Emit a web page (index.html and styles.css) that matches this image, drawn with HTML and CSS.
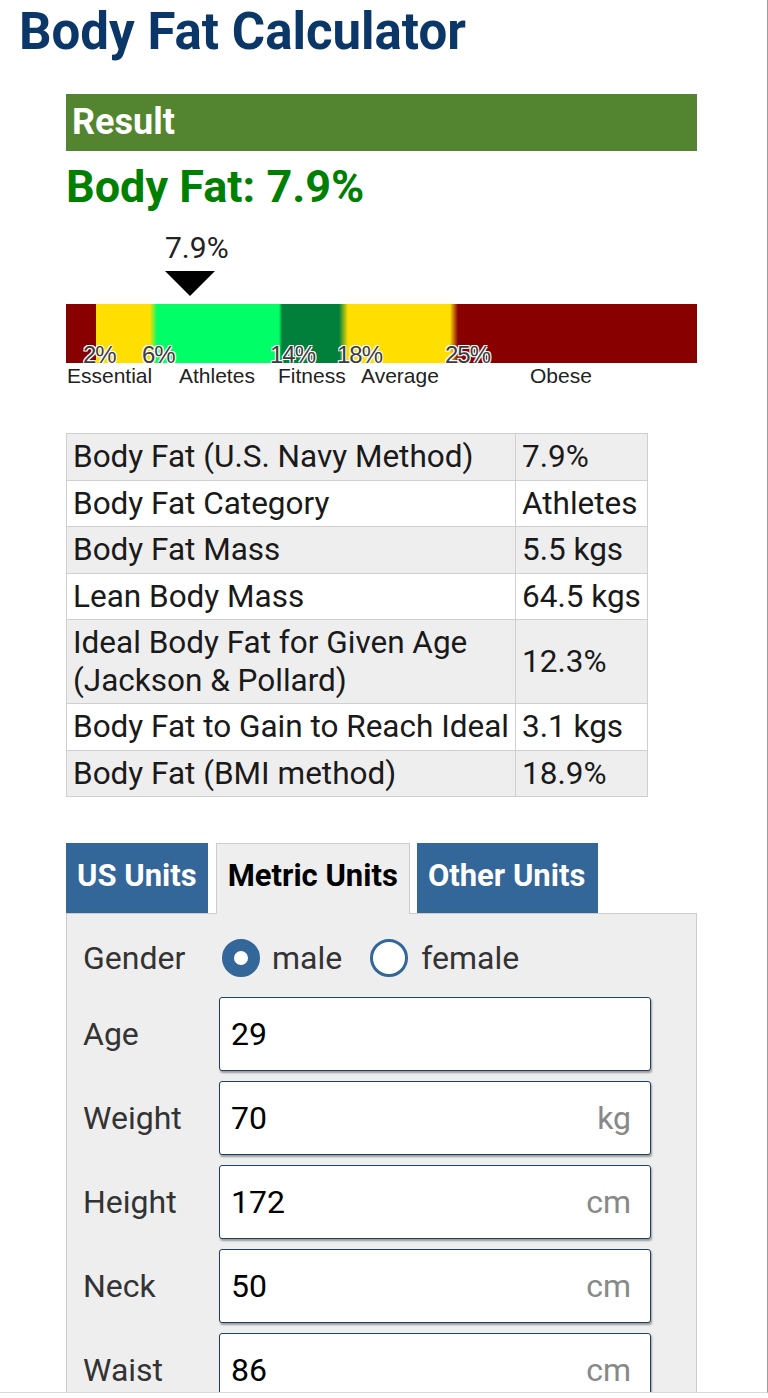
FILE: index.html
```html
<!DOCTYPE html>
<html lang="en">
<head>
<meta charset="utf-8">
<title>Body Fat Calculator</title>
<link rel="stylesheet" href="styles.css">
</head>
<body>
<div class="page">
  <h1 class="title">Body Fat Calculator</h1>
  <div class="content">
    <h2 class="result-head">Result</h2>
    <div class="result-value">Body Fat: 7.9%</div>

    <div class="scale">
      <div class="marker">
        <span class="marker-val">7.9%</span>
        <svg class="marker-arrow" viewBox="0 0 50 25" aria-hidden="true"><polygon points="0,0 50,0 25,25" fill="#000"/></svg>
      </div>
      <div class="bar">
        <span class="pct" style="left:17px">2%</span>
        <span class="pct" style="left:76px">6%</span>
        <span class="pct" style="left:204px">14%</span>
        <span class="pct" style="left:271px">18%</span>
        <span class="pct" style="left:379px">25%</span>
      </div>
      <div class="cats">
        <span class="cat" style="left:1px">Essential</span>
        <span class="cat" style="left:113px">Athletes</span>
        <span class="cat" style="left:212px">Fitness</span>
        <span class="cat" style="left:295px">Average</span>
        <span class="cat" style="left:464px">Obese</span>
      </div>
    </div>

    <table class="stats">
      <colgroup><col class="c1"><col class="c2"></colgroup>
      <tr><td>Body Fat (U.S. Navy Method)</td><td>7.9%</td></tr>
      <tr><td>Body Fat Category</td><td>Athletes</td></tr>
      <tr><td>Body Fat Mass</td><td>5.5 kgs</td></tr>
      <tr><td>Lean Body Mass</td><td>64.5 kgs</td></tr>
      <tr><td>Ideal Body Fat for Given Age (Jackson &amp; Pollard)</td><td>12.3%</td></tr>
      <tr><td>Body Fat to Gain to Reach Ideal</td><td>3.1 kgs</td></tr>
      <tr><td>Body Fat (BMI method)</td><td>18.9%</td></tr>
    </table>

    <div class="tabs">
      <div class="tab">US Units</div>
      <div class="tab active">Metric Units</div>
      <div class="tab other">Other Units</div>
    </div>
    <div class="panel">
      <div class="row gender-row">
        <span class="lbl">Gender</span>
        <div class="radios">
          <label class="radio"><input type="radio" name="g" class="radio-in male-in" checked><span>male</span></label>
          <label class="radio"><input type="radio" name="g" class="radio-in female-in"><span>female</span></label>
        </div>
      </div>
      <div class="row">
        <span class="lbl">Age</span>
        <div class="field"><input class="val" value="29"></div>
      </div>
      <div class="row">
        <span class="lbl">Weight</span>
        <div class="field"><input class="val" value="70"><span class="unit">kg</span></div>
      </div>
      <div class="row">
        <span class="lbl">Height</span>
        <div class="field"><input class="val" value="172"><span class="unit">cm</span></div>
      </div>
      <div class="row">
        <span class="lbl">Neck</span>
        <div class="field"><input class="val" value="50"><span class="unit">cm</span></div>
      </div>
      <div class="row">
        <span class="lbl">Waist</span>
        <div class="field"><input class="val" value="86"><span class="unit">cm</span></div>
      </div>
    </div>
  </div>
</div>
</body>
</html>
```
FILE: styles.css
```css
* { box-sizing: border-box; }
html, body { margin: 0; padding: 0; background: #fff; }
body { font-family: Roboto, "Noto Sans", sans-serif; color: #1a1a1a; }

.page {
  width: 768px;
  height: 1393px;
  border-right: 1px solid #9a9a9a;
  border-bottom: 1px solid #d9d9d9;
  overflow: hidden;
}

.title {
  margin: 0;
  padding: 2px 0 0 19px;
  font-size: 51px;
  line-height: 60px;
  font-weight: 700;
  color: #0b3768;
}

.content { margin: 32px 0 0 66px; width: 631px; }

.result-head {
  margin: 0;
  height: 57px;
  padding-left: 6px;
  background: #538531;
  color: #fff;
  font-size: 36px;
  line-height: 57px;
  font-weight: 700;
}

.result-value {
  margin-top: 10px;
  font-size: 45px;
  line-height: 52px;
  font-weight: 700;
  color: #008000;
}

.marker { margin: 17px 0 0 99px; width: 80px; }
.marker-val { display: block; font-size: 30px; line-height: 36px; color: #222; }
.marker-arrow { display: block; margin-top: 5px; width: 50px; height: 25px; }

.bar {
  position: relative;
  height: 59px;
  margin-top: 8px;
  background: linear-gradient(to right,
    #880000 0 30px,
    #ffde00 30px 84px,
    #00ff66 91px 213px,
    #00803a 216px 273px,
    #ffde00 282px 384px,
    #880000 392px 100%);
}
.pct {
  position: absolute;
  top: 42px;
  font-family: "Liberation Sans", Arial, sans-serif;
  font-size: 24px;
  line-height: 17px;
  letter-spacing: -1px;
  color: #3c3c3c;
  text-shadow: 0 0 1px #fff, 1px 1px 0 #fff, -1px -1px 0 #fff, 1px -1px 0 #fff, -1px 1px 0 #fff;
}
.cats { position: relative; height: 24px; }
.cat {
  position: absolute;
  top: 3px;
  font-family: "Liberation Sans", Arial, sans-serif;
  font-size: 21px;
  line-height: 20px;
  color: #222;
}

.stats {
  margin-top: 46px;
  width: 581px;
  border-collapse: collapse;
  table-layout: fixed;
  font-size: 31.5px;
  line-height: 37.5px;
}
.stats .c1 { width: 449px; }
.stats .c2 { width: 132px; }
.stats td { border: 1px solid #cfcfcf; padding: 4px 6px; vertical-align: middle; }
.stats tr:nth-child(odd) { background: #eee; }

.tabs { display: flex; gap: 7px; align-items: flex-end; margin-top: 46px; }
.tab {
  height: 70px;
  padding: 14px 11px 0;
  font-size: 31px;
  line-height: 37px;
  font-weight: 700;
  background: #336699;
  color: #fff;
}
.tab.other { padding-right: 13px; }
.tab.active {
  position: relative;
  z-index: 1;
  height: 71px;
  margin-bottom: -1px;
  margin-left: 1px;
  padding-top: 13px;
  background: #eee;
  color: #000;
  border: 1px solid #ccc;
  border-bottom: none;
}

.panel {
  height: 600px;
  padding: 21px 0 0 16px;
  background: #eee;
  border: 1px solid #ccc;
}
.row {
  display: grid;
  grid-template-columns: 136px 432px;
  align-items: center;
  margin-bottom: 10px;
}
.gender-row { height: 46px; margin-bottom: 16px; }
.lbl { font-size: 32px; color: #333; }

.radios { display: flex; align-items: center; font-size: 32px; color: #333; }
.radio { display: flex; align-items: center; }
.radio-in {
  appearance: none;
  -webkit-appearance: none;
  margin: 0;
  width: 38px;
  height: 38px;
  border-radius: 50%;
  background: #fff;
  border: 3px solid #336699;
}
.radio-in:checked { border-width: 12px; }
.male-in { margin-left: 3px; margin-right: 12px; }
.female-in { margin-left: 28px; margin-right: 13px; }

.field {
  height: 74px;
  display: flex;
  align-items: center;
  padding: 0 19px 0 11px;
  background: #fff;
  border: 1px solid #1f3f5e;
  border-radius: 3px;
  box-shadow: 1px 2px 2px rgba(0, 0, 0, 0.35);
}
.val {
  flex: 1;
  min-width: 0;
  border: none;
  outline: none;
  padding: 0;
  background: transparent;
  font: inherit;
  font-size: 32px;
  color: #000;
}
.unit { font-size: 32px; color: #888; }
```
